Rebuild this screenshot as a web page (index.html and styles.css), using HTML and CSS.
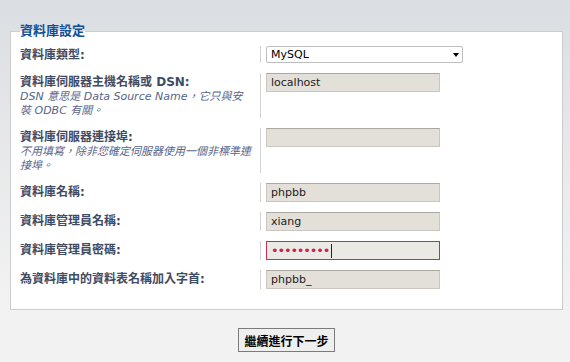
FILE: index.html
```html
<!DOCTYPE html>
<html lang="zh-Hant">
  <head>
    <meta charset="UTF-8" />
    <title>資料庫設定</title>
    <link rel="stylesheet" href="styles.css">
  </head>
  <body>
    <div class="page">
      <fieldset class="panel">
        <legend>資料庫設定</legend>

        <dl class="row">
          <dt><label for="dbms">資料庫類型:</label></dt>
          <dd>
            <div class="select-wrap">
              <select id="dbms" name="dbms">
                <option selected>MySQL</option>
                <option>PostgreSQL</option>
                <option>SQLite</option>
              </select>
              <span class="arrow"></span>
            </div>
          </dd>
        </dl>

        <dl class="row">
          <dt>
            <label for="dbhost">資料庫伺服器主機名稱或 DSN:</label>
            <span class="hint">DSN 意思是 Data Source Name，它只與安裝 ODBC 有關。</span>
          </dt>
          <dd><input type="text" id="dbhost" class="field" value="localhost" /></dd>
        </dl>

        <dl class="row">
          <dt>
            <label for="dbport">資料庫伺服器連接埠:</label>
            <span class="hint">不用填寫，除非您確定伺服器使用一個非標準連接埠。</span>
          </dt>
          <dd><input type="text" id="dbport" class="field" value="" /></dd>
        </dl>

        <dl class="row">
          <dt><label for="dbname">資料庫名稱:</label></dt>
          <dd><input type="text" id="dbname" class="field" value="phpbb" /></dd>
        </dl>

        <dl class="row">
          <dt><label for="dbuser">資料庫管理員名稱:</label></dt>
          <dd><input type="text" id="dbuser" class="field" value="xiang" /></dd>
        </dl>

        <dl class="row">
          <dt><label for="dbpasswd">資料庫管理員密碼:</label></dt>
          <dd>
            <div class="field field-pass" id="dbpasswd"><span class="dots">•••••••••</span><span class="caret"></span></div>
          </dd>
        </dl>

        <dl class="row">
          <dt><label for="prefix">為資料庫中的資料表名稱加入字首:</label></dt>
          <dd><input type="text" id="prefix" class="field" value="phpbb_" /></dd>
        </dl>
      </fieldset>

      <div class="actions">
        <button type="submit">繼續進行下一步</button>
      </div>
    </div>
  </body>
</html>
```

FILE: styles.css
```css
html,
body {
  margin: 0;
  padding: 0;
}
body {
  font-family: "DejaVu Sans", "Noto Sans CJK TC", sans-serif;
  font-size: 11px;
  color: #3f4b63;
  background: linear-gradient(#dbdee2 0, #f2f2f2 300px) no-repeat;
  background-color: #f2f2f2;
  height: 362px;
}
.page {
  padding: 23px 7px 0 10px;
}
.panel {
  margin: 0;
  padding: 7px 10px 20px 9px;
  border: 1px solid #cccccc;
  background-color: #fff;
}
.panel legend {
  padding: 0;
  font-size: 13px;
  line-height: 16px;
  font-weight: bold;
  color: #115098;
}
.row {
  display: flex;
  margin: 0 0 10px;
}
.row:last-child {
  margin-bottom: 0;
}
.row dt {
  width: 240px;
  box-sizing: border-box;
  padding: 2px 7px 0 0;
  font-size: 12px;
  line-height: 15px;
  font-weight: bold;
  color: #3f4b63;
}
.row dd {
  margin: 0;
  padding-left: 5px;
  border-left: 1px solid #d3d3d3;
}
.hint {
  display: block;
  font-size: 11px;
  line-height: 14px;
  font-weight: normal;
  font-style: italic;
  color: #56648a;
}

.field {
  display: block;
  width: 174px;
  height: 19px;
  box-sizing: border-box;
  margin: 0;
  padding: 0 4px;
  font-family: "DejaVu Sans", "Noto Sans CJK TC", sans-serif;
  font-size: 11px;
  color: #222;
  background-color: #e3e0d9;
  border: 1px solid #cbc7bf;
  border-top-color: #aca8a0;
  outline: none;
}
.field-pass {
  display: flex;
  align-items: center;
  background-color: #ebe9e3;
  border: 1px solid #c2305a;
}
.dots {
  color: #c4284f;
  font-size: 13px;
  letter-spacing: -1.2px;
}
.caret {
  width: 1px;
  height: 14px;
  margin-left: 2px;
  background-color: #222;
}

.select-wrap {
  position: relative;
  width: 197px;
}
.select-wrap select {
  appearance: none;
  display: block;
  width: 100%;
  height: 17px;
  margin: 0;
  padding: 0 4px;
  font-family: "DejaVu Sans", "Noto Sans CJK TC", sans-serif;
  font-size: 11px;
  color: #000;
  background-color: #fff;
  border: 1px solid #bdbdbd;
  border-radius: 2px;
  outline: none;
}
.arrow {
  position: absolute;
  right: 4px;
  top: 7px;
  width: 0;
  height: 0;
  border-left: 3.5px solid transparent;
  border-right: 3.5px solid transparent;
  border-top: 4px solid #000;
  pointer-events: none;
}

.actions {
  margin-top: 18px;
  text-align: center;
}
.actions button {
  height: 24px;
  padding: 0 5px;
  font-family: "DejaVu Sans", "Noto Sans CJK TC", sans-serif;
  font-size: 12px;
  font-weight: bold;
  color: #000;
  background-color: #efefef;
  border: 1px solid #7b7b7b;
  border-radius: 0;
  cursor: pointer;
}
```
